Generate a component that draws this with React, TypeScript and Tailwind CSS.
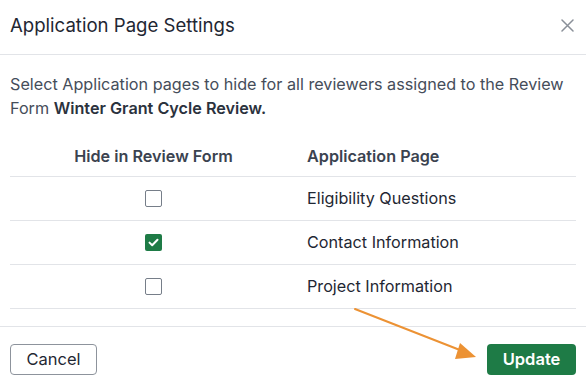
import React from "react";

function Checkbox({ checked }: { checked?: boolean }) {
  if (checked) {
    return (
      <div className="w-[17px] h-[17px] rounded-[2px] bg-[#1e7b46] flex items-center justify-center">
        <svg width="11" height="9" viewBox="0 0 11 9" fill="none">
          <path d="M1.5 4.6L4.2 7.2L9.5 1.8" stroke="white" strokeWidth="2" strokeLinecap="round" strokeLinejoin="round" />
        </svg>
      </div>
    );
  }
  return <div className="w-[17px] h-[17px] rounded-[2px] border-[1.5px] border-[#767e89] bg-white" />;
}

export default function App() {
  const rows = [
    { name: "Eligibility Questions", checked: false },
    { name: "Contact Information", checked: true },
    { name: "Project Information", checked: false },
  ];
  return (
    <div className="w-[586px] h-[386px] bg-white relative overflow-hidden" style={{ fontFamily: "Inter, 'Noto Sans', sans-serif" }}>
      <div className="h-[55px] flex items-center justify-between pl-[10px] pr-[12px] pb-[3px] border-b border-[#e2e4e8]">
        <div className="text-[18.6px] text-[#1f2733]">Application Page Settings</div>
        <svg width="13" height="13" viewBox="0 0 13 13">
          <path d="M1 1L12 12M12 1L1 12" stroke="#8a9099" strokeWidth="1.5" strokeLinecap="round" />
        </svg>
      </div>
      <div className="pl-[10px] pr-[4px] pt-[17px] text-[16.2px] leading-[24px] text-[#454d5a] whitespace-nowrap">
        Select Application pages to hide for all reviewers assigned to the Review
        <br />
        Form <span className="font-semibold text-[#2b323d]">Winter Grant Cycle Review.</span>
      </div>
      <div className="mx-[10px] mt-[16px]">
        <div className="flex h-[41px] items-center border-b border-[#e2e4e8] text-[16.2px] font-semibold text-[#3b4350]">
          <div className="w-[287px] text-center">Hide in Review Form</div>
          <div className="pl-[10px]">Application Page</div>
        </div>
        {rows.map((r) => (
          <div key={r.name} className="flex h-[44px] items-center border-b border-[#e2e4e8] text-[16.2px] text-[#1f2733]">
            <div className="w-[287px] flex justify-center">
              <Checkbox checked={r.checked} />
            </div>
            <div className="pl-[10px]">{r.name}</div>
          </div>
        ))}
      </div>
      <div className="absolute left-0 right-0 top-[326px] border-t border-[#e2e4e8] h-[60px] flex items-center justify-between px-[10px] pt-[5px]">
        <button className="h-[31px] w-[87px] rounded-[4px] border border-[#8d939c] bg-white text-[16.5px] text-[#1f2733]">Cancel</button>
        <button className="h-[31px] w-[89px] rounded-[4px] bg-[#1e7b46] text-[16.5px] font-semibold text-white">Update</button>
      </div>
      <svg className="absolute left-0 top-0 pointer-events-none" width="586" height="386">
        <line x1="355" y1="309" x2="465" y2="352" stroke="#ec9234" strokeWidth="2" strokeLinecap="round" />
        <path d="M476 357 L460 343 L455 359 Z" fill="#ec9234" />
      </svg>
    </div>
  );
}
